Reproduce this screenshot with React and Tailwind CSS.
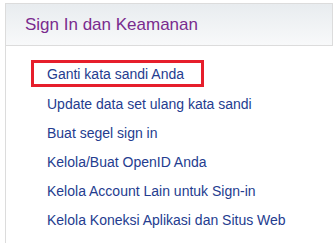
import React from "react";

const items = [
  "Update data set ulang kata sandi",
  "Buat segel sign in",
  "Kelola/Buat OpenID Anda",
  "Kelola Account Lain untuk Sign-in",
  "Kelola Koneksi Aplikasi dan Situs Web",
];

export default function App() {
  return (
    <div className="w-[333px] h-[243px] overflow-hidden bg-white" style={{ fontFamily: '"Liberation Sans", Arial, sans-serif' }}>
      <div className="ml-[5px] mt-[3px] w-[328px] h-[300px] border-l border-t border-[#dcdcdc]">
        <div className="h-[42px] border-b border-r border-[#dcdcdc] bg-gradient-to-b from-[#e8ecef] to-[#f8f9fa] flex items-center pl-[19px]">
          <span className="text-[17px] text-[#7a2b8e] leading-none">Sign In dan Keamanan</span>
        </div>
        <div className="pl-[25px] pt-[14px]">
          <div className="w-[173px] h-[27px] border-[3px] border-[#e61e2b] flex items-center pl-[13px]">
            <span className="text-[14px] text-[#243c8f] leading-none">Ganti kata sandi Anda</span>
          </div>
          <div className="flex flex-col mt-[2px]">
            {items.map((t) => (
              <div key={t} className="h-[29px] flex items-center pl-[16px] text-[14px] text-[#243c8f] leading-none">
                {t}
              </div>
            ))}
          </div>
        </div>
      </div>
    </div>
  );
}
